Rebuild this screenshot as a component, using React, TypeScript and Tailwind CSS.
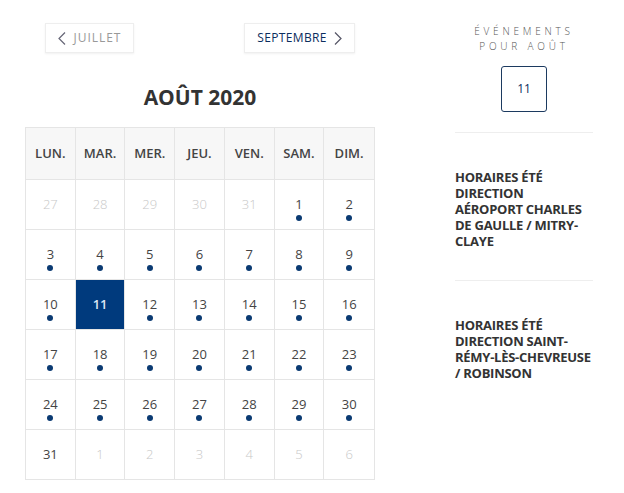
import React from 'react';

const days = ['LUN.', 'MAR.', 'MER.', 'JEU.', 'VEN.', 'SAM.', 'DIM.'];

type Cell = { n: number; out?: boolean; dot?: boolean };

const cells: Cell[] = [
    ...[27, 28, 29, 30, 31].map((n) => ({ n, out: true })),
    ...Array.from({ length: 30 }, (_, i) => ({ n: i + 1, dot: true })),
    { n: 31 },
    ...[1, 2, 3, 4, 5, 6].map((n) => ({ n, out: true })),
];

const weeks: Cell[][] = [];
for (let i = 0; i < cells.length; i += 7) weeks.push(cells.slice(i, i + 7));

// line breaks as in the original layout
const events = [
    ['HORAIRES ÉTÉ', 'DIRECTION', 'AÉROPORT CHARLES', 'DE GAULLE / MITRY-', 'CLAYE'],
    ['HORAIRES ÉTÉ', 'DIRECTION SAINT-', 'RÉMY-LÈS-CHEVREUSE', '/ ROBINSON'],
];

export default function App() {
    return (
        <div className="w-[624px] h-[493px] bg-white flex font-['Open_Sans',sans-serif] text-[#333]">
            {/* --- CALENDAR --- */}
            <div className="w-[350px] ml-[25px] pt-[23px]">
                <div className="flex justify-between px-[20px]">
                    <button className="h-[30px] w-[89px] border border-[#eee] shadow-[0_1px_2px_rgba(0,0,0,0.06)] flex items-center justify-center gap-[8px] text-[12px] tracking-[0.08em] text-[#999]">
                        <svg width="8" height="13" viewBox="0 0 8 13" fill="none" stroke="#667" strokeWidth="1.2">
                            <path d="M7 0.5L1 6.5L7 12.5" />
                        </svg>
                        JUILLET
                    </button>
                    <button className="h-[30px] w-[111px] border border-[#eee] shadow-[0_1px_2px_rgba(0,0,0,0.06)] flex items-center justify-center gap-[7px] text-[12px] tracking-[0.03em] text-[#0c2d5e]">
                        SEPTEMBRE
                        <svg width="8" height="13" viewBox="0 0 8 13" fill="none" stroke="#556" strokeWidth="1.2">
                            <path d="M1 0.5L7 6.5L1 12.5" />
                        </svg>
                    </button>
                </div>

                <h2 className="mt-[29px] text-center text-[21px] font-bold leading-[30px] text-[#333]">AOÛT 2020</h2>

                <div className="mt-[15px] border border-[#e5e5e5]">
                    <div className="grid grid-cols-7 bg-[#f7f7f7] border-b border-[#e5e5e5]">
                        {days.map((d, i) => (
                            <div
                                key={d}
                                className={`h-[51px] flex items-center justify-center text-[13px] font-semibold text-[#444] ${i < 6 ? 'border-r border-[#e5e5e5]' : ''}`}
                            >
                                {d}
                            </div>
                        ))}
                    </div>
                    {weeks.map((w, wi) => (
                        <div key={wi} className={`grid grid-cols-7 ${wi < weeks.length - 1 ? 'border-b border-[#e5e5e5]' : ''}`}>
                            {w.map((c, ci) => {
                                const sel = !c.out && c.n === 11;
                                return (
                                    <div
                                        key={ci}
                                        className={`h-[49px] flex flex-col items-center pt-[15px] ${ci < 6 ? 'border-r border-[#e5e5e5]' : ''} ${sel ? 'bg-[#003a7d]' : ''}`}
                                    >
                                        <span
                                            className={`text-[13px] leading-[18px] ${c.out ? 'text-[#c8c8c8] font-light' : sel ? 'text-[#dce6f5] font-semibold' : 'text-[#444]'}`}
                                        >
                                            {c.n}
                                        </span>
                                        {c.dot && !sel && <span className="mt-[2px] w-[6px] h-[6px] rounded-full bg-[#0a3a72]" />}
                                    </div>
                                );
                            })}
                        </div>
                    ))}
                </div>
            </div>

            {/* --- EVENTS SIDEBAR --- */}
            <div className="w-[138px] ml-[80px] pt-[24px]">
                <div className="text-center text-[10px] leading-[15px] tracking-[0.38em] text-[#555] font-light">
                    ÉVÉNEMENTS
                    <br />
                    POUR AOÛT
                </div>
                <div className="mt-[12px] flex justify-center">
                    <div className="w-[46px] h-[46px] border border-[#1c3a60] rounded-[3px] flex items-center justify-center text-[12px] text-[#0c2d5e]">
                        11
                    </div>
                </div>
                <div className="mt-[20px] border-t border-[#eee]" />
                {events.map((lines, i) => (
                    <div key={i} className={`pt-[36px] ${i === 0 ? 'pb-[31px] border-b border-[#eee]' : ''}`}>
                        <div className="text-[13px] font-bold leading-[16px] tracking-[-0.02em] text-[#333] h-[80px] whitespace-nowrap">
                            {lines.map((l) => (
                                <div key={l}>{l}</div>
                            ))}
                        </div>
                    </div>
                ))}
            </div>
        </div>
    );
}
